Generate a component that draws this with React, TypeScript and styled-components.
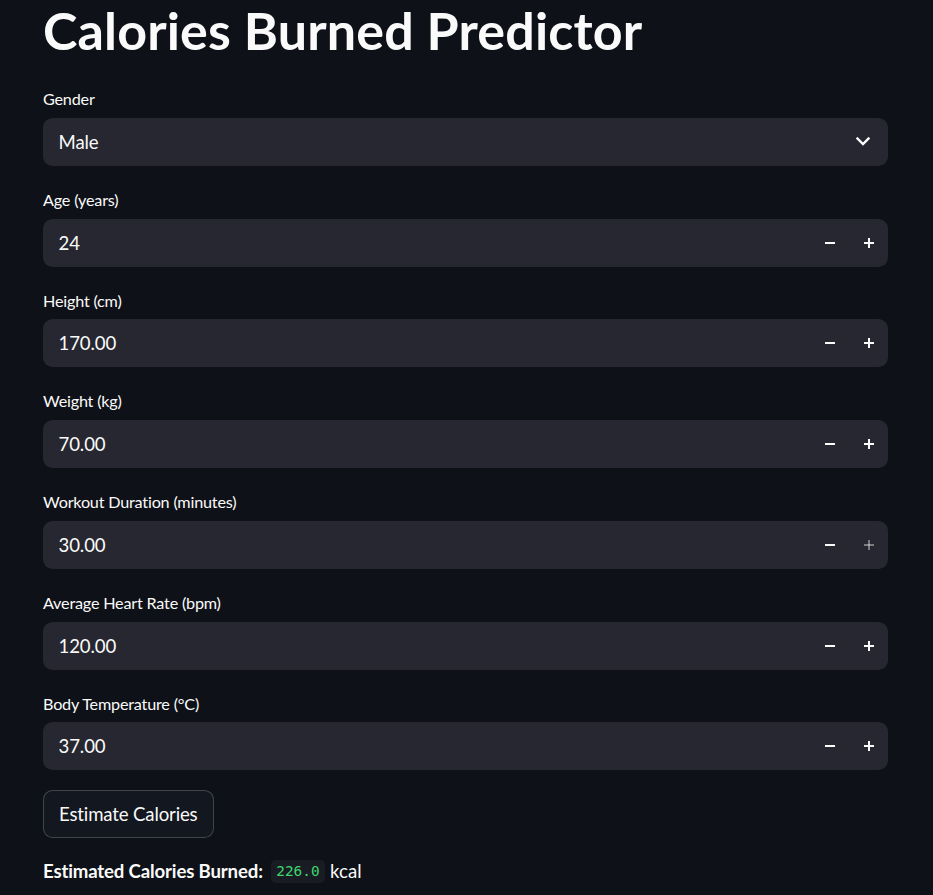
import React from "react";
import styled, { createGlobalStyle } from "styled-components";

const GlobalStyle = createGlobalStyle`
  html, body { margin: 0; padding: 0; background: #0e1117; }
  body { color: #fafafa; font-family: "Lato", "Noto Sans", sans-serif; }
  * { box-sizing: border-box; }
`;

const Page = styled.main`
  width: 933px;
  min-height: 895px;
  padding: 0 45px 0 43px;
  display: flex;
  flex-direction: column;
  gap: 19.2px;
  overflow: hidden;
`;

const Title = styled.h1`
  margin: 0;
  height: 65px;
  font-size: 52px;
  line-height: 60px;
  font-weight: 700;
  letter-spacing: 0.15px;
  color: #fafafa;
`;

const Field = styled.div`
  display: flex;
  flex-direction: column;
`;

const Label = styled.label`
  display: flex;
  align-items: center;
  height: 28.8px;
  margin-bottom: 4.8px;
  font-size: 16.2px;
  letter-spacing: -0.2px;
  color: #fafafa;
`;

const Box = styled.div`
  height: 48px;
  border-radius: 9.6px;
  background: #262730;
  display: flex;
  align-items: center;
  padding-left: 15.5px;
`;

const Value = styled.span`
  flex: 1;
  font-size: 18.6px;
  letter-spacing: -0.1px;
  color: #fafafa;
`;

const Chevron = styled.span`
  width: 48px;
  height: 48px;
  display: flex;
  align-items: center;
  justify-content: center;
  margin-right: 1px;
`;

const StepButton = styled.button<{ $disabled?: boolean }>`
  width: 38.4px;
  height: 48px;
  border: none;
  background: transparent;
  padding: 0;
  display: flex;
  align-items: center;
  justify-content: center;
  color: ${(p) => (p.$disabled ? "rgba(250,250,250,0.4)" : "#fafafa")};
`;

const Action = styled.button`
  align-self: flex-start;
  height: 48px;
  padding: 0 15px;
  border-radius: 9.6px;
  border: 1px solid rgba(250, 250, 250, 0.2);
  background: rgb(19, 23, 32);
  color: #fafafa;
  font-family: "Lato", "Noto Sans", sans-serif;
  font-size: 18.6px;
  letter-spacing: -0.15px;
`;

const Result = styled.p`
  margin: 0;
  display: flex;
  align-items: center;
  height: 29px;
  font-size: 18.6px;
  color: #fafafa;
`;

const Strong = styled.strong`
  font-weight: 700;
  letter-spacing: -0.15px;
  margin-right: 8px;
`;

const Code = styled.code`
  font-family: "DejaVu Sans Mono", "Liberation Mono", monospace;
  font-size: 14.4px;
  line-height: 23px;
  height: 23px;
  padding: 0 5.5px;
  border-radius: 4.8px;
  background: #1a1c23;
  color: #3dd56d;
  margin-right: 5px;
`;

const Minus = () => (
  <svg width="10" height="10" viewBox="0 0 10 10">
    <rect x="0" y="4" width="10" height="2" fill="currentColor" />
  </svg>
);

const Plus = () => (
  <svg width="10" height="10" viewBox="0 0 10 10">
    <rect x="0" y="4" width="10" height="2" fill="currentColor" />
    <rect x="4" y="0" width="2" height="10" fill="currentColor" />
  </svg>
);

const ChevronDown = () => (
  <svg width="14" height="9" viewBox="0 0 14 9">
    <path d="M1.5 1.5 L7 7 L12.5 1.5" fill="none" stroke="#fafafa" strokeWidth="2.4" strokeLinecap="square" />
  </svg>
);

type NumberField = { label: string; value: string; plusDisabled?: boolean };

const numbers: NumberField[] = [
  { label: "Age (years)", value: "24" },
  { label: "Height (cm)", value: "170.00" },
  { label: "Weight (kg)", value: "70.00" },
  { label: "Workout Duration (minutes)", value: "30.00", plusDisabled: true },
  { label: "Average Heart Rate (bpm)", value: "120.00" },
  { label: "Body Temperature (°C)", value: "37.00" },
];

export default function App() {
  return (
    <>
      <GlobalStyle />
      <Page>
        <Title>Calories Burned Predictor</Title>
        <Field>
          <Label>Gender</Label>
          <Box>
            <Value>Male</Value>
            <Chevron>
              <ChevronDown />
            </Chevron>
          </Box>
        </Field>
        {numbers.map((n) => (
          <Field key={n.label}>
            <Label>{n.label}</Label>
            <Box>
              <Value>{n.value}</Value>
              <StepButton aria-label="decrement">
                <Minus />
              </StepButton>
              <StepButton aria-label="increment" $disabled={n.plusDisabled}>
                <Plus />
              </StepButton>
            </Box>
          </Field>
        ))}
        <Action>Estimate Calories</Action>
        <Result>
          <Strong>Estimated Calories Burned:</Strong>
          <Code>226.0</Code>
          kcal
        </Result>
      </Page>
    </>
  );
}
